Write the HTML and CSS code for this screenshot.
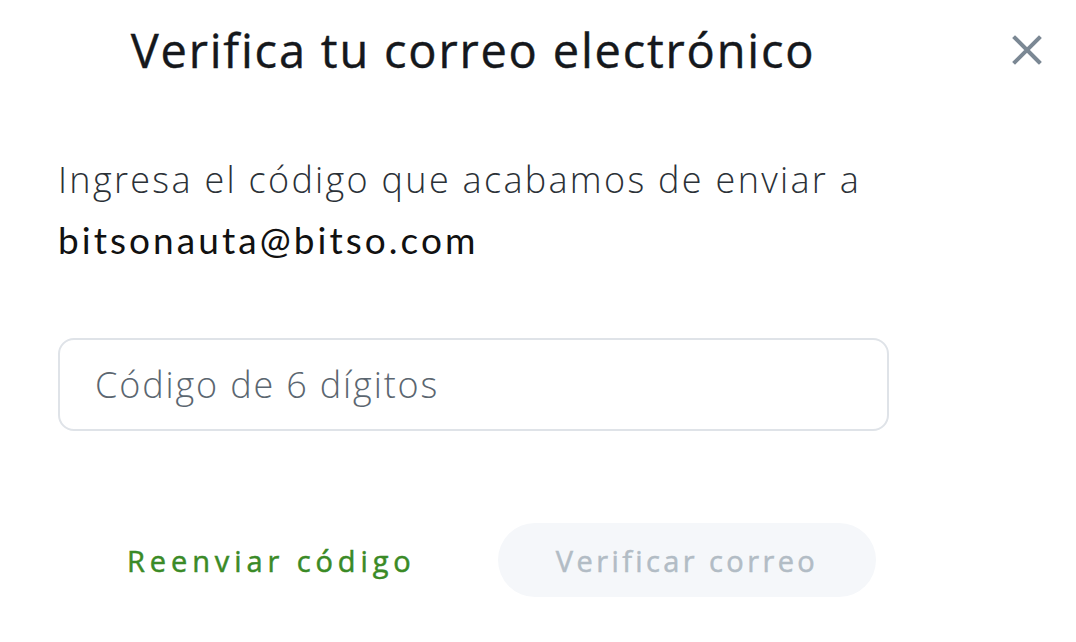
FILE: index.html
```html
<!DOCTYPE html>
<html lang="es">
<head>
<meta charset="utf-8">
<title>Verifica tu correo electrónico</title>
<link rel="stylesheet" href="styles.css">
</head>
<body>
<div class="modal">
  <header class="modal-header">
    <h1 class="modal-title">Verifica tu correo electrónico</h1>
    <button class="close-btn" aria-label="Cerrar">
      <svg width="30" height="30" viewBox="0 0 30 30"><path d="M3 3 L27 27 M27 3 L3 27" stroke="#7b8894" stroke-width="4" stroke-linecap="square" fill="none"/></svg>
    </button>
  </header>
  <div class="modal-body">
    <p class="lead">Ingresa el código que acabamos de enviar a</p>
    <p class="email">bitsonauta@bitso.com</p>
    <input class="code-input" type="text" placeholder="Código de 6 dígitos">
    <div class="actions">
      <button class="link-btn">Reenviar código</button>
      <button class="primary-btn" disabled>Verificar correo</button>
    </div>
  </div>
</div>
</body>
</html>
```
FILE: styles.css
```css
* { box-sizing: border-box; }
html, body { margin: 0; padding: 0; background: #fff; }
body { font-family: "Open Sans", sans-serif; color: #1a1d21; }
.modal { width: 1076px; height: 642px; padding: 0 34px 0 58px; }
.modal-header { display: flex; align-items: center; height: 104px; padding-bottom: 4px; }
.modal-title { margin: 0; width: 830px; text-align: center; font-size: 47px; font-weight: 500; line-height: 60px; color: #15181c; letter-spacing: 1.8px; -webkit-text-stroke: 0.4px #15181c; }
.close-btn { margin-left: auto; border: 0; background: none; padding: 0; width: 30px; height: 30px; cursor: pointer; display: flex; }
.modal-body { width: 830px; }
.lead { margin: 46px 0 0; font-size: 36px; font-weight: 300; line-height: 60px; letter-spacing: 2.3px; color: #2b3137; white-space: nowrap; }
.email { margin: 0; font-family: Lato, sans-serif; font-size: 37px; line-height: 60px; letter-spacing: 3.05px; color: #111; }
.code-input { display: block; margin-top: 68px; width: 831px; height: 93px; border: 2px solid #dfe3e8; border-radius: 16px; padding: 0 35px; font-family: "Open Sans", sans-serif; font-size: 36px; font-weight: 300; letter-spacing: 1.85px; color: #333; outline: none; }
.code-input::placeholder { color: #5b6670; }
.actions { display: flex; align-items: center; margin-top: 92px; padding-left: 69px; }
.link-btn { border: 0; background: none; padding: 0; font-family: "Open Sans", sans-serif; font-weight: 500; font-size: 29px; letter-spacing: 4.9px; color: #3a8a26; width: 371px; text-align: left; cursor: pointer; -webkit-text-stroke: 0.5px #3a8a26; }
.primary-btn { border: 0; width: 378px; height: 74px; border-radius: 37px; background: #f5f7fa; font-family: "Open Sans", sans-serif; font-weight: 500; font-size: 29px; letter-spacing: 3.4px; color: #b2bcc5; -webkit-text-stroke: 0.5px #b2bcc5; }
```
